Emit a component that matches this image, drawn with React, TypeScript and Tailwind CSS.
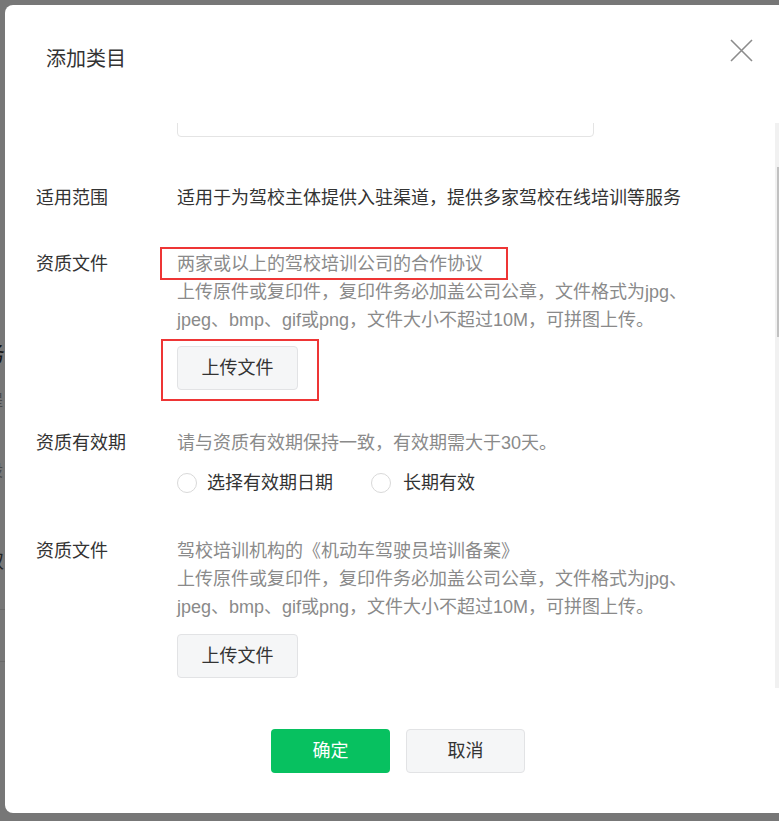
export default function App() {
  return (
    <div className="relative w-[779px] h-[821px] overflow-hidden bg-[#777777] font-['Liberation_Sans','Noto_Sans_CJK_SC',sans-serif]">
      {/* backdrop page peeking at the left edge */}
      <span className="absolute left-[-17px] top-[340px] text-[22px] leading-[28px] text-[#151515]">务</span>
      <span className="absolute left-[-13px] top-[390px] text-[16px] leading-[22px] text-[#4a4a4a]">提</span>
      <span className="absolute left-[-13px] top-[460px] text-[16px] leading-[22px] text-[#4a4a4a]">设</span>
      <span className="absolute left-[-14px] top-[550px] text-[18px] leading-[24px] text-[#222]">双</span>
      <div className="absolute left-0 top-[609px] w-[5px] h-px bg-[#6a6a6a]" />
      <div className="absolute left-0 top-[661px] w-[5px] h-px bg-[#6a6a6a]" />

      <div className="relative flex pt-[5px] pl-[5px]">
        <div className="w-[786px] h-[808px] shrink-0 rounded-[8px] bg-white flex flex-col">
          <div className="h-[118px] flex items-start justify-between">
            <div className="pt-[40px] pl-[41px] text-[20px] leading-[28px] text-[#333]">添加类目</div>
            <svg className="mt-[34px] mr-[38px]" width="23" height="23" viewBox="0 0 23 23" fill="none">
              <path d="M1 1L22 22M22 1L1 22" stroke="#8c8c8c" strokeWidth="1.6" />
            </svg>
          </div>

          <div className="h-[565px] flex">
            <div className="flex-1 overflow-hidden pl-[31px]">
              <div className="ml-[141px] mt-[-26px] w-[417px] h-[40px] border border-[#e4e4e4] rounded-[4px]" />

              <div className="mt-[47px] flex text-[18px] leading-[28px]">
                <div className="w-[141px] shrink-0 text-[#333]">适用范围</div>
                <div className="text-[#333] whitespace-nowrap">适用于为驾校主体提供入驻渠道，提供多家驾校在线培训等服务</div>
              </div>

              <div className="mt-[38px] flex text-[18px] leading-[28px]">
                <div className="w-[141px] shrink-0 text-[#333]">资质文件</div>
                <div className="flex flex-col whitespace-nowrap">
                  <div className="relative text-[#8a8a8a]">
                    两家或以上的驾校培训公司的合作协议
                    <div className="absolute left-[-17px] top-[-3px] w-[348px] h-[33px] border-2 border-[#ee3535]" />
                  </div>
                  <div className="text-[#8a8a8a]">上传原件或复印件，复印件务必加盖公司公章，文件格式为jpg、</div>
                  <div className="text-[#8a8a8a]">jpeg、bmp、gif或png，文件大小不超过10M，可拼图上传。</div>
                  <div className="relative mt-[12px] w-[121px]">
                    <button className="w-[121px] h-[44px] border border-[#e2e3e5] bg-[#f5f6f7] rounded-[4px] text-[18px] text-[#333]">上传文件</button>
                    <div className="absolute left-[-16px] top-[-7px] w-[158px] h-[62px] border-2 border-[#ee3535]" />
                  </div>
                </div>
              </div>

              <div className="mt-[39px] flex text-[18px] leading-[28px]">
                <div className="w-[141px] shrink-0 text-[#333]">资质有效期</div>
                <div className="flex flex-col whitespace-nowrap">
                  <div className="text-[#8a8a8a]">请与资质有效期保持一致，有效期需大于30天。</div>
                  <div className="mt-[12px] flex items-center text-[#333]">
                    <span className="w-[20px] h-[20px] rounded-full border border-[#d9d9d9]" />
                    <span className="ml-[10px]">选择有效期日期</span>
                    <span className="ml-[38px] w-[20px] h-[20px] rounded-full border border-[#d9d9d9]" />
                    <span className="ml-[12px]">长期有效</span>
                  </div>
                </div>
              </div>

              <div className="mt-[40px] flex text-[18px] leading-[28px]">
                <div className="w-[141px] shrink-0 text-[#333]">资质文件</div>
                <div className="flex flex-col whitespace-nowrap">
                  <div className="text-[#8a8a8a]">驾校培训机构的《机动车驾驶员培训备案》</div>
                  <div className="text-[#8a8a8a]">上传原件或复印件，复印件务必加盖公司公章，文件格式为jpg、</div>
                  <div className="text-[#8a8a8a]">jpeg、bmp、gif或png，文件大小不超过10M，可拼图上传。</div>
                  <button className="mt-[13px] w-[121px] h-[44px] border border-[#e2e3e5] bg-[#f5f6f7] rounded-[4px] text-[18px] text-[#333]">上传文件</button>
                </div>
              </div>
            </div>

            <div className="w-[12px] mr-[4px] bg-[#f1f1f1] pt-[44px] px-[2px]">
              <div className="h-[170px] bg-[#c1c1c1]" />
            </div>
          </div>

          <div className="mt-[41px] flex justify-center gap-[16px]">
            <button className="w-[119px] h-[44px] rounded-[4px] bg-[#07c160] text-[18px] text-white">确定</button>
            <button className="w-[119px] h-[44px] rounded-[4px] border border-[#e2e3e5] bg-[#f5f6f7] text-[18px] text-[#333]">取消</button>
          </div>
        </div>
      </div>
    </div>
  );
}
